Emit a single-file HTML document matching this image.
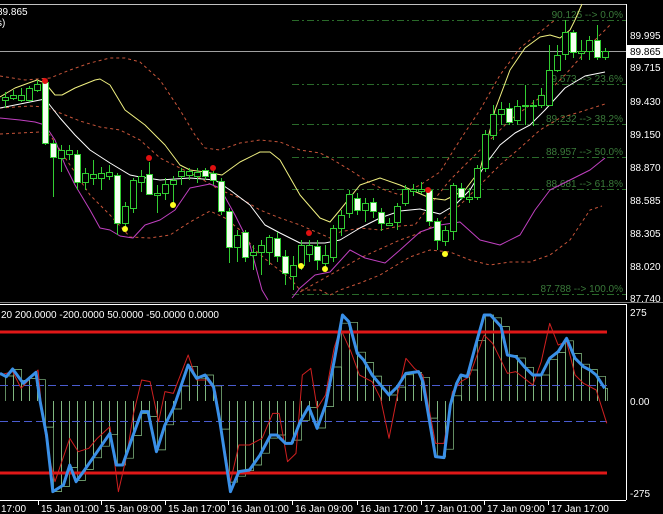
<!DOCTYPE html>
<html><head><meta charset="utf-8"><style>
html,body{margin:0;padding:0;background:#000;width:663px;height:514px;overflow:hidden}
svg{display:block}
text{font-family:"Liberation Sans",sans-serif;font-size:10px}
</style></head><body>
<svg id="s" width="663" height="514" xmlns="http://www.w3.org/2000/svg">
<rect width="663" height="514" fill="#000"/>
<line x1="0" y1="4.5" x2="626" y2="4.5" stroke="#c0c0c0"/>
<line x1="626.5" y1="4" x2="626.5" y2="300" stroke="#fff"/>
<line x1="0" y1="51.5" x2="626" y2="51.5" stroke="#a0a0a0"/>
<line x1="0" y1="302.5" x2="663" y2="302.5" stroke="#808080"/>
<line x1="0" y1="304.5" x2="626" y2="304.5" stroke="#fff"/>
<line x1="626.5" y1="304" x2="626.5" y2="500" stroke="#fff"/>
<line x1="0" y1="500.5" x2="626" y2="500.5" stroke="#fff"/>
<text x="-3" y="15" fill="#fff">89.865</text>
<text x="-3" y="26" fill="#fff">s)</text>
<g id="fib"></g>
<g id="lines"></g>
<g id="cand"></g>
<g id="ind"></g>
<g fill="#fff">
<text x="630" y="39">89.995</text>
<text x="630" y="71">89.715</text>
<text x="630" y="105">89.430</text>
<text x="630" y="138">89.150</text>
<text x="630" y="171">88.870</text>
<text x="630" y="204">88.585</text>
<text x="630" y="237">88.305</text>
<text x="630" y="270">88.020</text>
<text x="630" y="302">87.740</text>
<text x="630" y="316">275</text>
<text x="630" y="405">0.00</text>
<text x="630" y="497">-275</text>
<text x="1" y="318">20 200.0000 -200.0000 50.0000 -50.0000 0.0000</text>
</g>
<rect x="627" y="45" width="36" height="13" fill="#fff"/>
<text x="630" y="55" fill="#000">89.865</text>
<g id="tm" fill="#fff"></g>
</svg>
<script>
var NS="http://www.w3.org/2000/svg";
function el(p,t,a,txt){var e=document.createElementNS(NS,t);for(var k in a)e.setAttribute(k,a[k]);if(txt)e.textContent=txt;document.getElementById(p).appendChild(e);return e;}
function pl(p,pts,st,w,da){el(p,"polyline",{points:pts.map(function(q){return q[0]+","+q[1]}).join(" "),fill:"none",stroke:st,"stroke-width":w,"stroke-dasharray":da||"none","stroke-linejoin":"round"});}
var fib=[[20,"90.125 --> 0.0%"],[84,"89.573 --> 23.6%"],[124,"89.232 --> 38.2%"],[157,"88.957 --> 50.0%"],[189,"88.681 --> 61.8%"],[294,"87.788 --> 100.0%"]];
fib.forEach(function(f){el("fib","line",{x1:292,y1:f[0]+.5,x2:626,y2:f[0]+.5,stroke:"#2a6a2a","stroke-dasharray":"7,3,2,3"});el("fib","text",{x:623,y:f[0]-2,"text-anchor":"end",fill:"#3a7a3a"},f[1]);});
pl("lines",[[0,76],[25,80],[50,78],[70,70],[90,63],[110,58],[125,58],[140,62],[160,80],[180,110],[195,135],[205,148],[220,150],[240,143],[260,140],[280,142],[300,150],[320,153],[330,158],[350,170],[370,183],[385,190],[400,195],[420,185],[440,172],[460,140],[480,110],[500,75],[520,48],[540,32],[555,20]],"#c8553a",1,"3,3");
pl("lines",[[0,108],[30,106],[45,107],[60,113],[80,121],[100,127],[120,130],[140,140],[160,158],[180,168],[200,178],[220,190],[240,198],[260,210],[280,218],[300,225],[330,238],[340,232],[360,228],[380,230],[400,226],[415,225],[430,205],[450,180],[470,160],[490,140],[510,120],[530,105],[550,90],[565,75],[580,58],[595,40],[610,25]],"#c8553a",1,"3,3");
pl("lines",[[300,292],[330,275],[360,258],[400,240],[420,233],[440,222],[460,205],[480,185],[500,165],[520,148],[540,130],[560,118],[580,112],[605,104]],"#c8553a",1,"3,3");
pl("lines",[[0,134],[20,133],[40,132],[50,135],[70,165],[90,195],[110,215],[130,237],[150,238],[170,235],[190,222],[210,211],[225,218],[240,230],[255,250],[270,263],[290,278],[300,290],[320,290],[330,295],[340,290],[360,283],[380,275],[410,257],[430,250],[450,252],[470,260],[490,265],[510,262],[530,262],[550,255],[570,240],[580,225],[590,210],[602,206]],"#c8553a",1,"3,3");
pl("lines",[[0,118],[20,120],[35,122],[45,125],[55,140],[65,165],[75,185],[90,210],[100,228],[110,230],[120,236],[133,238],[145,225],[160,220],[175,210],[190,188],[210,184],[220,188],[235,215],[250,245],[262,290],[268,300]],"#c040c0",1);
pl("lines",[[292,298],[300,288],[315,275],[330,272],[350,250],[365,258],[385,263],[400,250],[420,232],[440,225],[460,222],[480,240],[500,245],[520,235],[535,210],[550,190],[570,180],[590,170],[605,158]],"#c040c0",1);
pl("lines",[[0,97],[15,88],[37,80],[45,83],[55,95],[62,95],[75,88],[95,80],[100,79],[110,85],[125,110],[145,125],[165,145],[180,165],[190,170],[205,172],[222,175],[240,162],[260,152],[270,152],[280,160],[300,195],[320,218],[330,222],[340,210],[360,185],[380,178],[400,185],[430,198],[445,200],[465,190],[480,170],[495,110],[510,70],[525,48],[540,37],[550,35],[560,38],[570,30],[575,20],[582,4]],"#f0f080",1);
pl("lines",[[0,108],[15,105],[30,102],[45,99],[60,118],[75,135],[90,150],[110,163],[130,175],[140,177],[160,180],[190,178],[215,180],[230,190],[250,205],[265,225],[280,233],[300,243],[325,243],[340,240],[360,228],[380,218],[400,211],[420,209],[440,214],[455,205],[470,190],[485,165],[500,145],[515,133],[530,125],[545,110],[565,88],[585,76],[605,72]],"#ffffff",1);
var C=[[5,97,100,92,108,0],[13,95,98,90,100,0],[21,95,100,88,102,0],[29,88,100,86,102,0],[37,84,90,80,92,0],[45,82,143,80,145,1],[53,143,157,140,197,1],[61,150,158,145,172,0],[69,150,154,145,160,0],[77,154,182,150,190,1],[85,173,182,168,190,0],[93,174,178,160,185,0],[101,173,178,167,190,0],[109,172,176,165,180,0],[117,175,223,173,235,1],[125,206,223,202,228,0],[133,180,208,178,213,0],[141,176,182,170,192,0],[149,174,194,162,195,1],[157,193,195,185,213,0],[165,184,193,178,200,0],[173,180,184,176,205,0],[181,171,176,168,185,0],[189,171,175,168,180,0],[197,172,176,168,183,0],[205,170,176,168,180,1],[213,173,180,170,185,1],[221,181,211,178,215,1],[229,211,247,208,263,1],[237,235,247,230,262,0],[245,232,257,230,262,1],[253,252,255,245,270,0],[261,245,252,240,275,0],[269,237,252,235,265,0],[277,238,256,232,262,1],[285,256,273,250,285,1],[293,265,276,256,290,0],[301,245,265,240,270,0],[309,245,254,240,262,0],[317,246,260,240,270,1],[325,255,263,245,272,0],[333,228,257,225,262,0],[341,215,228,210,236,0],[349,194,213,190,218,0],[357,198,210,193,215,1],[365,203,210,198,222,0],[373,202,211,198,218,1],[381,212,223,208,231,1],[389,223,225,218,226,0],[397,206,222,203,230,0],[405,189,203,185,206,0],[413,189,191,184,196,0],[421,189,191,182,194,0],[429,190,221,188,226,1],[437,221,240,218,250,1],[445,230,241,226,246,0],[453,185,231,183,240,0],[461,188,197,183,200,1],[469,197,199,188,203,0],[477,168,197,165,200,0],[485,134,168,130,172,0],[493,114,135,105,140,0],[501,109,114,102,125,0],[509,108,122,103,125,1],[517,106,120,100,125,0],[525,105,106,85,125,0],[533,105,106,100,126,0],[541,95,105,88,108,0],[549,70,105,45,106,0],[557,55,70,45,72,0],[565,32,54,20,60,0],[573,32,52,30,58,1],[581,51,53,40,60,0],[589,40,51,36,60,0],[597,40,57,25,60,1],[605,51,57,48,60,0]];
C.forEach(function(c){var x=c[0];el("cand","line",{x1:x+.5,y1:c[3],x2:x+.5,y2:c[4],stroke:"#32cd32"});var h=Math.max(1,c[2]-c[1]);el("cand","rect",{x:x-2.5,y:c[1]+.5,width:6,height:h,fill:c[5]?"#f4fff0":"#000",stroke:"#32cd32"});});
[[45,81,"#e01010"],[149,158,"#e01010"],[213,168,"#e01010"],[309,233,"#e01010"],[428,190,"#e01010"],[125,229,"#ffff20"],[173,205,"#ffff20"],[301,266,"#ffff20"],[325,269,"#ffff20"],[445,254,"#ffff20"]].forEach(function(d){el("cand","circle",{cx:d[0],cy:d[1],r:3,fill:d[2]});});
var K=2.365;function cv(a){return a.map(function(p){return [p[0]/K,p[1]/3+295]});}
var B=cv([[0,235],[15,245],[30,222],[55,265],[85,232],[95,320],[110,420],[125,590],[150,570],[165,510],[180,560],[200,525],[230,470],[260,415],[275,510],[290,510],[315,420],[335,350],[350,350],[370,470],[390,390],[410,340],[445,210],[465,250],[485,240],[505,275],[520,380],[545,590],[565,530],[590,525],[615,480],[640,420],[655,420],[675,445],[690,445],[710,380],[730,335],[750,400],[770,330],[790,200],[810,60],[825,80],[845,175],[860,195],[880,240],[920,300],[940,275],[960,235],[990,230],[1000,260],[1030,485],[1050,488],[1065,330],[1080,265],[1090,240],[1105,245],[1125,150],[1145,60],[1160,60],[1185,95],[1200,180],[1220,185],[1240,215],[1260,240],[1280,240],[1300,190],[1320,170],[1340,130],[1360,190],[1380,215],[1395,225],[1410,240],[1430,280]]);
var R=cv([[0,240],[30,230],[50,280],[90,225],[100,360],[115,480],[130,560],[165,430],[185,470],[210,460],[230,430],[260,395],[280,590],[300,480],[315,360],[335,255],[355,260],[375,380],[390,290],[410,295],[445,180],[465,255],[490,255],[510,290],[530,450],[545,560],[565,450],[590,450],[620,430],[645,355],[660,355],[680,500],[700,475],[715,240],[735,220],[750,340],[770,300],[790,160],[805,100],[830,170],[850,240],[880,260],[900,310],[920,430],[940,300],[960,190],[980,220],[1000,240],[1030,445],[1050,445],[1070,290],[1090,260],[1110,245],[1145,120],[1165,145],[1200,235],[1220,230],[1260,270],[1280,200],[1300,85],[1320,150],[1340,140],[1360,240],[1380,265],[1410,285],[1435,385]]);
function interp(x){for(var i=1;i<B.length;i++){if(B[i][0]>=x){var a=B[i-1],b=B[i];return a[1]+(b[1]-a[1])*(x-a[0])/(b[0]-a[0]);}}return B[B.length-1][1];}
var z=401;
for(var x=5;x<=605;x+=8){var y=interp(x);el("ind","path",{d:"M"+(x+.5)+" "+z+"V"+y.toFixed(1)+"H"+(Math.min(x+8,607)+.5)+"V"+z,fill:"none",stroke:"#8cc88c","stroke-width":0.7});}
el("ind","line",{x1:0,y1:385.5,x2:607,y2:385.5,stroke:"#4a5cd0","stroke-dasharray":"8,4"});
el("ind","line",{x1:0,y1:421.5,x2:607,y2:421.5,stroke:"#4a5cd0","stroke-dasharray":"8,4"});
el("ind","line",{x1:0,y1:332,x2:607,y2:332,stroke:"#e01818","stroke-width":3});
el("ind","line",{x1:0,y1:473,x2:607,y2:473,stroke:"#e01818","stroke-width":3});
pl("ind",R,"#d02020",1);
pl("ind",B,"#3a90e8",3);
var T=[[38,"15 Jan 01:00"],[101,"15 Jan 09:00"],[165,"15 Jan 17:00"],[228,"16 Jan 01:00"],[292,"16 Jan 09:00"],[357,"16 Jan 17:00"],[421,"17 Jan 01:00"],[484,"17 Jan 09:00"],[548,"17 Jan 17:00"]];
el("tm","text",{x:1,y:512},"17:00");
T.forEach(function(t){el("tm","line",{x1:t[0]+.5,y1:500,x2:t[0]+.5,y2:505,stroke:"#fff"});el("tm","text",{x:t[0]+3,y:512},t[1]);});
</script>
</body></html>
